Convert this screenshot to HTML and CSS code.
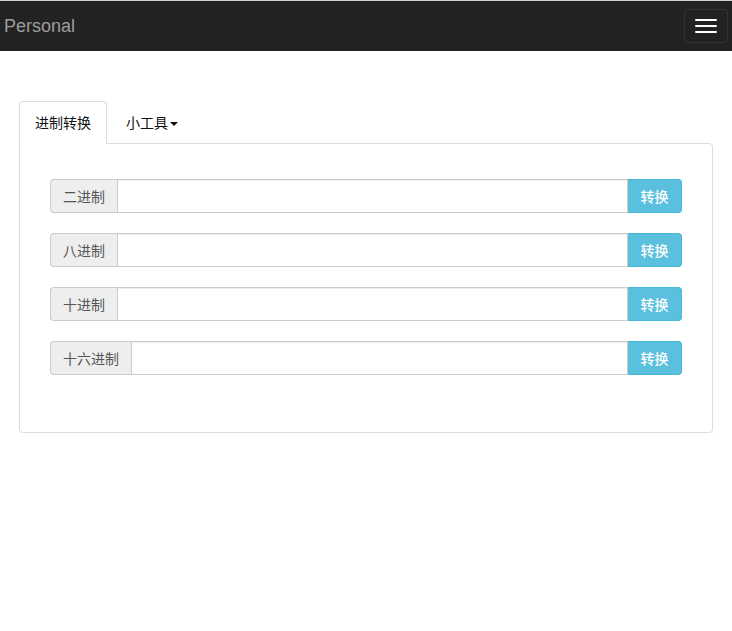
FILE: index.html
```html
<!DOCTYPE html>
<html lang="zh-CN">
<head>
<meta charset="utf-8">
<title>Personal</title>
<link rel="stylesheet" href="styles.css">
</head>
<body>
<nav class="navbar">
  <a class="brand" href="#">Personal</a>
  <button class="toggle" type="button" aria-label="menu">
    <span class="bar"></span><span class="bar"></span><span class="bar"></span>
  </button>
</nav>
<main class="container">
  <ul class="tabs">
    <li class="tab active">进制转换</li>
    <li class="tab">小工具<span class="caret"></span></li>
  </ul>
  <div class="panel">
    <div class="group"><span class="addon">二进制</span><input class="field" type="text"><button class="btn">转换</button></div>
    <div class="group"><span class="addon">八进制</span><input class="field" type="text"><button class="btn">转换</button></div>
    <div class="group"><span class="addon">十进制</span><input class="field" type="text"><button class="btn">转换</button></div>
    <div class="group"><span class="addon">十六进制</span><input class="field" type="text"><button class="btn">转换</button></div>
  </div>
</main>
</body>
</html>
```
FILE: styles.css
```css
* { box-sizing: border-box; }
html, body { margin: 0; padding: 0; background: #fff; }
body {
  font-family: "Liberation Sans", "Noto Sans CJK SC", sans-serif;
  font-size: 14px;
  line-height: 20px;
  color: #333;
}
.navbar {
  height: 51px;
  background: #222;
  border-top: 1px solid #d0d0d0;
  display: flex;
  align-items: center;
  justify-content: space-between;
  padding: 0 4px 0 4px;
}
.brand {
  font-size: 18px;
  line-height: 20px;
  color: #9d9d9d;
  text-decoration: none;
  margin-top: -1px;
}
.toggle {
  width: 44px;
  height: 34px;
  background: transparent;
  border: 1px solid #333;
  border-radius: 4px;
  display: flex;
  flex-direction: column;
  align-items: center;
  justify-content: center;
  gap: 4px;
  padding: 0;
  margin-top: -1px;
}
.bar {
  display: block;
  width: 22px;
  height: 2px;
  background: #fff;
  border-radius: 1px;
}
.container {
  padding: 50px 19px 0;
}
.tabs {
  list-style: none;
  margin: 0;
  padding: 0;
  display: flex;
  font-family: "Noto Sans CJK SC", sans-serif;
}
.tab {
  padding: 10px 15px 11px;
  border: 1px solid transparent;
  border-bottom: none;
  border-radius: 4px 4px 0 0;
  margin-right: 3px;
  color: #111;
  line-height: 20px;
}
.tab.active {
  border-color: #ddd;
  background: #fff;
  margin-bottom: -1px;
  position: relative;
}
.caret {
  display: inline-block;
  width: 0;
  height: 0;
  margin-left: 2px;
  vertical-align: middle;
  border-top: 4px solid #111;
  border-left: 4px solid transparent;
  border-right: 4px solid transparent;
}
.panel {
  border: 1px solid #ddd;
  border-radius: 0 4px 4px 4px;
  padding: 35px 30px 57px;
  display: flex;
  flex-direction: column;
  gap: 20px;
  box-shadow: 0 1px 1px rgba(0,0,0,.05);
}
.group {
  display: flex;
  height: 34px;
  font-family: "Noto Sans CJK SC", sans-serif;
}
.addon {
  display: flex;
  align-items: center;
  padding: 0 12px 1px;
  background: #eee;
  border: 1px solid #ccc;
  border-right: none;
  border-radius: 4px 0 0 4px;
  color: #555;
  font-size: 14px;
}
.field {
  flex: 1;
  min-width: 0;
  height: 34px;
  border: 1px solid #ccc;
  border-radius: 0;
  padding: 6px 12px;
  font-size: 14px;
  box-shadow: inset 0 1px 1px rgba(0,0,0,.075);
  outline: none;
}
.btn {
  width: 54px;
  height: 34px;
  border: 1px solid #46b8da;
  border-left: none;
  background: #5bc0de;
  color: #fff;
  font-family: "Noto Sans CJK SC", sans-serif;
  font-size: 14px;
  font-weight: 500;
  border-radius: 0 4px 4px 0;
  padding: 0 0 1px;
}
```
